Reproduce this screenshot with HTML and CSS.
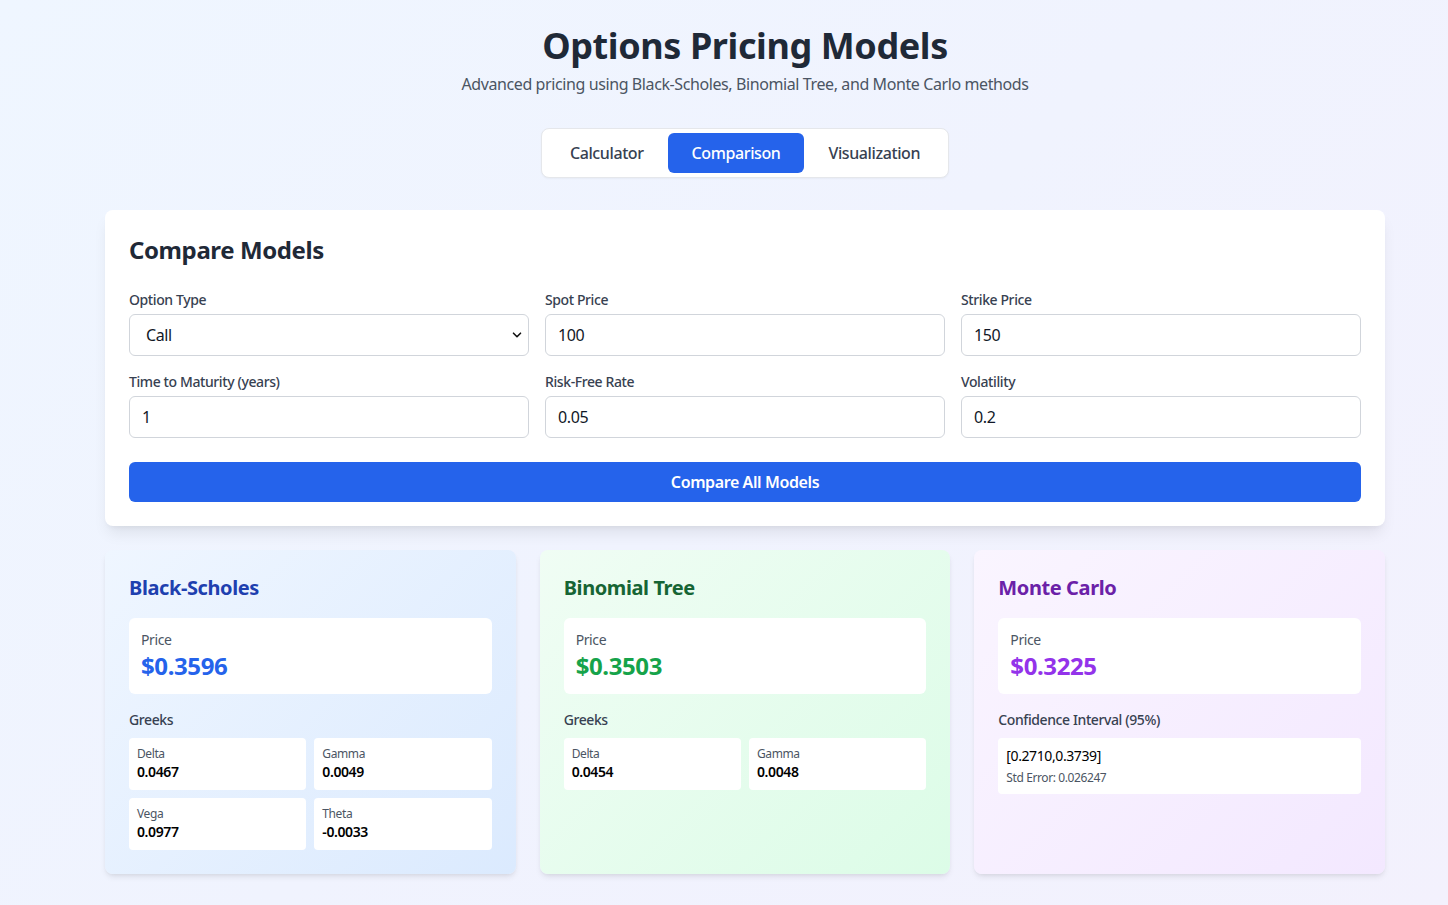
FILE: index.html
```html
<!DOCTYPE html>
<html lang="en">
<head>
<meta charset="utf-8">
<title>Options Pricing Models</title>
<link rel="stylesheet" href="styles.css">
</head>
<body>
<main class="page">
  <div class="container">
    <header class="hero">
      <h1 class="hero-title">Options Pricing Models</h1>
      <p class="hero-sub">Advanced pricing using Black-Scholes, Binomial Tree, and Monte Carlo methods</p>
    </header>

    <nav class="tabs-wrap">
      <div class="tabs">
        <button class="tab">Calculator</button>
        <button class="tab tab-active">Comparison</button>
        <button class="tab">Visualization</button>
      </div>
    </nav>

    <section class="panel">
      <h2 class="panel-title">Compare Models</h2>
      <div class="form-grid">
        <div class="field">
          <label class="label">Option Type</label>
          <div class="select-wrap">
            <select class="control control-select">
              <option>Call</option>
              <option>Put</option>
            </select>
            <svg class="chevron" width="12" height="12" viewBox="0 0 12 12"><path d="M2.5 4.2 L6 7.7 L9.5 4.2" fill="none" stroke="#111" stroke-width="1.6" stroke-linecap="round" stroke-linejoin="round"/></svg>
          </div>
        </div>
        <div class="field">
          <label class="label">Spot Price</label>
          <input class="control" type="text" value="100">
        </div>
        <div class="field">
          <label class="label">Strike Price</label>
          <input class="control" type="text" value="150">
        </div>
        <div class="field">
          <label class="label">Time to Maturity (years)</label>
          <input class="control" type="text" value="1">
        </div>
        <div class="field">
          <label class="label">Risk-Free Rate</label>
          <input class="control" type="text" value="0.05">
        </div>
        <div class="field">
          <label class="label">Volatility</label>
          <input class="control" type="text" value="0.2">
        </div>
      </div>
      <button class="primary-btn">Compare All Models</button>
    </section>

    <section class="results">
      <article class="model model-blue">
        <h3 class="model-title">Black-Scholes</h3>
        <div class="price-box">
          <div class="price-label">Price</div>
          <div class="price-value">$0.3596</div>
        </div>
        <div class="sub-title">Greeks</div>
        <div class="greeks">
          <div class="greek"><div class="greek-label">Delta</div><div class="greek-value">0.0467</div></div>
          <div class="greek"><div class="greek-label">Gamma</div><div class="greek-value">0.0049</div></div>
          <div class="greek"><div class="greek-label">Vega</div><div class="greek-value">0.0977</div></div>
          <div class="greek"><div class="greek-label">Theta</div><div class="greek-value">-0.0033</div></div>
        </div>
      </article>

      <article class="model model-green">
        <h3 class="model-title">Binomial Tree</h3>
        <div class="price-box">
          <div class="price-label">Price</div>
          <div class="price-value">$0.3503</div>
        </div>
        <div class="sub-title">Greeks</div>
        <div class="greeks">
          <div class="greek"><div class="greek-label">Delta</div><div class="greek-value">0.0454</div></div>
          <div class="greek"><div class="greek-label">Gamma</div><div class="greek-value">0.0048</div></div>
        </div>
      </article>

      <article class="model model-purple">
        <h3 class="model-title">Monte Carlo</h3>
        <div class="price-box">
          <div class="price-label">Price</div>
          <div class="price-value">$0.3225</div>
        </div>
        <div class="sub-title">Confidence Interval (95%)</div>
        <div class="ci-box">
          <div class="ci-value">[0.2710,0.3739]</div>
          <div class="ci-err">Std Error: 0.026247</div>
        </div>
      </article>
    </section>
  </div>
</main>
</body>
</html>
```

FILE: styles.css
```css
* { box-sizing: border-box; }

html, body {
  margin: 0;
  padding: 0;
}

body {
  font-family: "Noto Sans", "Open Sans", Arial, sans-serif;
  letter-spacing: -0.025em;
  color: #1f2937;
  background: linear-gradient(135deg, #eff6ff 0%, #f0f3fe 50%, #f3f1fd 100%);
  min-height: 905px;
}

.page {
  padding: 24px 21px 32px 63px;
}

.container {
  max-width: 1280px;
  margin: 0 auto;
}

.hero {
  text-align: center;
  margin-bottom: 32px;
}

.hero-title {
  margin: 0 0 6px;
  padding-top: 2px;
  font-size: 36px;
  line-height: 40px;
  font-weight: 700;
  color: #1f2937;
}

.hero-sub {
  margin: 0;
  font-size: 16px;
  line-height: 24px;
  color: #4b5563;
}

.tabs-wrap {
  display: flex;
  justify-content: center;
  margin-bottom: 32px;
}

.tabs {
  display: flex;
  background: #fff;
  border: 1px solid #e5e7eb;
  border-radius: 8px;
  padding: 4px;
  box-shadow: 0 1px 2px rgba(0,0,0,0.04);
}

.tab {
  font: inherit;
  font-size: 16px;
  line-height: 24px;
  letter-spacing: -0.025em;
  font-weight: 500;
  padding: 8px 24px;
  border: 0;
  border-radius: 6px;
  background: transparent;
  color: #374151;
  cursor: pointer;
}

.tab-active {
  background: #2563eb;
  color: #fff;
}

.panel {
  background: #fff;
  border-radius: 8px;
  padding: 24px;
  box-shadow: 0 10px 15px -3px rgba(0,0,0,0.08), 0 4px 6px -4px rgba(0,0,0,0.08);
  margin-bottom: 24px;
}

.panel-title {
  margin: 0 0 24px;
  font-size: 24px;
  line-height: 32px;
  font-weight: 700;
  color: #1f2937;
}

.form-grid {
  display: grid;
  grid-template-columns: repeat(3, 1fr);
  column-gap: 16px;
  row-gap: 16px;
}

.field {
  display: flex;
  flex-direction: column;
}

.label {
  font-size: 14px;
  line-height: 20px;
  font-weight: 500;
  color: #374151;
  margin-bottom: 4px;
}

.control {
  font: inherit;
  font-size: 16px;
  line-height: 24px;
  letter-spacing: -0.025em;
  height: 42px;
  padding: 8px 12px;
  border: 1px solid #d1d5db;
  border-radius: 6px;
  background: #fff;
  color: #111827;
  width: 100%;
  outline: none;
}

.select-wrap {
  position: relative;
}

.control-select {
  appearance: none;
  -webkit-appearance: none;
  padding-left: 16px;
}

.chevron {
  position: absolute;
  right: 6px;
  top: 15px;
  pointer-events: none;
}

.primary-btn {
  display: block;
  width: 100%;
  margin-top: 24px;
  font: inherit;
  font-size: 16px;
  line-height: 24px;
  letter-spacing: -0.025em;
  font-weight: 600;
  padding: 8px 16px;
  border: 0;
  border-radius: 6px;
  background: #2563eb;
  color: #fff;
  cursor: pointer;
}

.results {
  display: grid;
  grid-template-columns: repeat(3, 1fr);
  gap: 24px;
}

.model {
  border-radius: 8px;
  padding: 24px;
  box-shadow: 0 4px 6px -1px rgba(0,0,0,0.08), 0 2px 4px -2px rgba(0,0,0,0.08);
}

.model-blue { background: linear-gradient(135deg, #eff6ff, #dbeafe); }
.model-green { background: linear-gradient(135deg, #f0fdf4, #dcfce7); }
.model-purple { background: linear-gradient(135deg, #faf5ff, #f3e8ff); }

.model-title {
  margin: 0 0 16px;
  font-size: 20px;
  line-height: 28px;
  font-weight: 700;
}

.model-blue .model-title { color: #1e40af; }
.model-green .model-title { color: #166534; }
.model-purple .model-title { color: #6b21a8; }

.price-box {
  background: #fff;
  border-radius: 6px;
  padding: 12px;
}

.price-label {
  font-size: 14px;
  line-height: 20px;
  color: #4b5563;
}

.price-value {
  font-size: 24px;
  line-height: 32px;
  font-weight: 700;
}

.model-blue .price-value { color: #2563eb; }
.model-green .price-value { color: #16a34a; }
.model-purple .price-value { color: #9333ea; }

.sub-title {
  margin-top: 16px;
  margin-bottom: 8px;
  font-size: 14px;
  line-height: 20px;
  font-weight: 500;
  color: #374151;
}

.greeks {
  display: grid;
  grid-template-columns: 1fr 1fr;
  gap: 8px;
}

.greek {
  background: #fff;
  border-radius: 4px;
  padding: 8px;
}

.greek-label {
  font-size: 12px;
  line-height: 16px;
  color: #4b5563;
}

.greek-value {
  font-size: 14px;
  line-height: 20px;
  font-weight: 600;
  color: #000;
}

.ci-box {
  background: #fff;
  border-radius: 4px;
  padding: 8px;
}

.ci-value {
  font-size: 14px;
  line-height: 20px;
  color: #000;
}

.ci-err {
  margin-top: 4px;
  font-size: 12px;
  line-height: 16px;
  color: #4b5563;
}
```
